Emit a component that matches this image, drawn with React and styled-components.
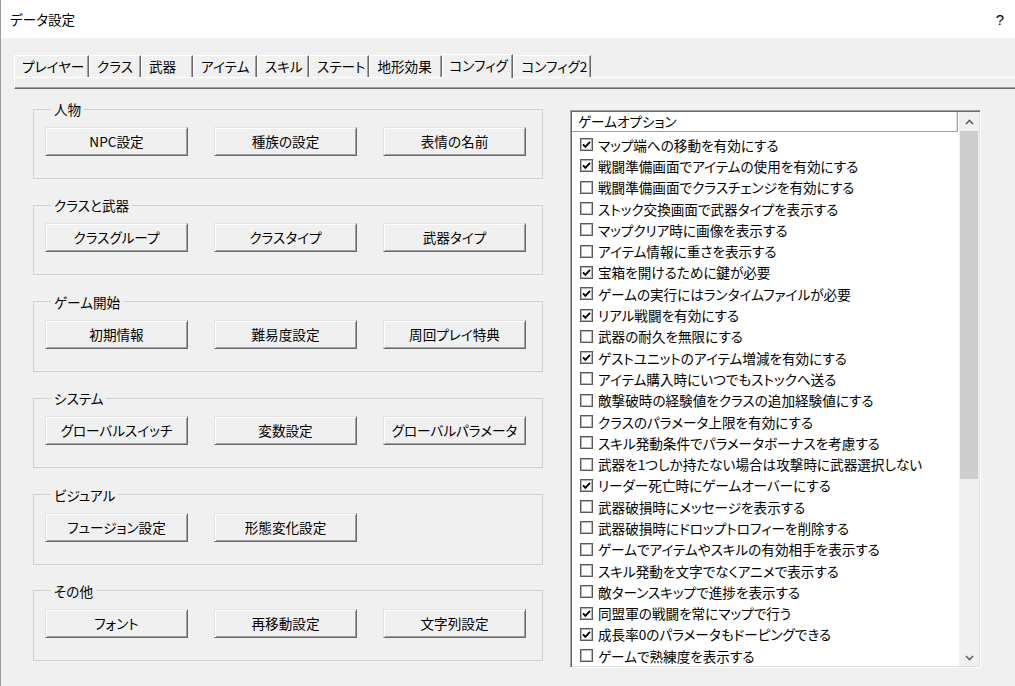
import React from 'react';
import styled, { createGlobalStyle } from 'styled-components';

const FONT = `"Noto Sans CJK JP", "Noto Sans", "Liberation Sans", sans-serif`;

const GlobalStyle = createGlobalStyle`
  html, body {
    margin: 0;
    padding: 0;
    background: #f0f0f0;
  }
`;

const Window = styled.div`
  width: 1015px;
  height: 686px;
  box-sizing: border-box;
  border-left: 1px solid #9a9a9a;
  background: #f0f0f0;
  display: flex;
  flex-direction: column;
  overflow: hidden;
  font-family: ${FONT};
  font-size: 13.6px;
  font-feature-settings: "palt";
  color: #000;
`;

const TitleBar = styled.div`
  flex: none;
  height: 38px;
  background: #fff;
  display: flex;
  align-items: center;
  justify-content: space-between;
  padding: 0 11px 0 9px;
`;

const Help = styled.span`
  font-family: "Liberation Sans", sans-serif;
  font-size: 15px;
`;

const TabBar = styled.div`
  flex: none;
  height: 39px;
  display: flex;
  align-items: flex-end;
  padding-left: 13px;
`;

const Tab = styled.div`
  flex: none;
  box-sizing: border-box;
  min-width: ${({ w }) => w}px;
  height: ${({ active }) => (active ? 24 : 22)}px;
  padding: 0 3px 0 ${({ active }) => (active ? 6 : 7)}px;
  border-top: 1px solid #fff;
  border-left: 1px solid #fff;
  border-right: 1px solid #696969;
  box-shadow: inset -1px 0 #a0a0a0;
  line-height: 20px;
  white-space: nowrap;
  position: relative;
  z-index: ${({ active }) => (active ? 1 : 0)};
  margin-bottom: ${({ active }) => (active ? -1 : 0)}px;
  background: #f0f0f0;
`;

const TabStrip = styled.div`
  flex: none;
  height: 12px;
  box-sizing: border-box;
  margin-left: 13px;
  border-top: 1px solid #fff;
  border-left: 1px solid #fff;
  border-bottom: 1px solid #696969;
  box-shadow: inset 0 -1px #a0a0a0;
`;

const Content = styled.div`
  display: flex;
  gap: 27px;
  padding: 12px 0 0 32px;
  align-items: flex-start;
`;

const LeftColumn = styled.div`
  width: 510px;
  display: flex;
  flex-direction: column;
  gap: 18.4px;
`;

const Group = styled.fieldset`
  margin: 0;
  min-width: 0;
  padding: 0 15px 22px 11px;
  border: 1px solid #d0d0d0;
`;

const Legend = styled.legend`
  margin-left: 6px;
  padding: 0 3px;
  line-height: 16px;
`;

const ButtonRow = styled.div`
  display: flex;
  gap: 26px;
  margin-top: 10px;
`;

const Button = styled.button`
  width: 143px;
  height: 29px;
  box-sizing: border-box;
  padding: 0;
  background: #f0f0f0;
  border: 1px solid;
  border-color: #e3e3e3 #696969 #696969 #e3e3e3;
  box-shadow: inset 1px 1px #fff, inset -1px -1px #a0a0a0;
  font: inherit;
  font-feature-settings: "palt";
  color: #000;
  line-height: 25px;
`;

const ListBox = styled.div`
  width: 411px;
  height: 558px;
  margin-top: 9px;
  box-sizing: border-box;
  padding: 1px;
  border: 1px solid;
  border-color: #a0a0a0 #fff #fff #a0a0a0;
  box-shadow: inset 1px 1px #696969, inset -1px -1px #e3e3e3;
  background: #fff;
  display: flex;
`;

const ListMain = styled.div`
  flex: 1;
  min-width: 0;
  display: flex;
  flex-direction: column;
  overflow: hidden;
`;

const Header = styled.div`
  flex: none;
  height: 20px;
  box-sizing: border-box;
  padding-left: 6px;
  border-bottom: 1px solid #a0a0a0;
  border-right: 1px solid #a0a0a0;
  box-shadow: inset -1px 0 #e3e3e3;
  margin-right: 1px;
  line-height: 19px;
  white-space: nowrap;
`;

const Rows = styled.div`
  padding-top: 2px;
`;

const Row = styled.div`
  height: 21.3px;
  display: flex;
  align-items: center;
  gap: 5px;
  padding-left: 8px;
  white-space: nowrap;
`;

const Box = styled.span`
  flex: none;
  width: 13px;
  height: 13px;
  box-sizing: border-box;
  border: 1px solid #5a5a5a;
  box-shadow: inset 0 0 0 1px #b4b4b4;
  background: #fff;
  display: flex;
  align-items: center;
  justify-content: center;
`;

const ScrollBar = styled.div`
  flex: none;
  width: 20px;
  background: #f0f0f0;
  display: flex;
  flex-direction: column;
`;

const ArrowButton = styled.div`
  flex: none;
  height: ${({ h }) => h}px;
  display: flex;
  align-items: center;
  justify-content: center;
`;

const Thumb = styled.div`
  flex: none;
  height: 348px;
  margin: 0 1px;
  background: #cdcdcd;
`;

const Track = styled.div`
  flex: 1;
`;

const Check = () => (
  <svg width="9" height="9" viewBox="0 0 9 9">
    <path d="M1 4.4 L3.4 6.8 L8 1.8" fill="none" stroke="#000" strokeWidth="1.9" />
  </svg>
);

const Chevron = ({ up }) => (
  <svg width="9" height="6" viewBox="0 0 9 6">
    <path
      d={up ? 'M1 5 L4.5 1.5 L8 5' : 'M1 1 L4.5 4.5 L8 1'}
      fill="none"
      stroke="#606060"
      strokeWidth="1.6"
    />
  </svg>
);

const tabs = [
  ['プレイヤー', 75],
  ['クラス', 52],
  ['武器', 52],
  ['アイテム', 64],
  ['スキル', 52],
  ['ステート', 60],
  ['地形効果', 73],
  ['コンフィグ', 71],
  ['コンフィグ2', 71],
];

const groups = [
  ['人物', ['NPC設定', '種族の設定', '表情の名前']],
  ['クラスと武器', ['クラスグループ', 'クラスタイプ', '武器タイプ']],
  ['ゲーム開始', ['初期情報', '難易度設定', '周回プレイ特典']],
  ['システム', ['グローバルスイッチ', '変数設定', 'グローバルパラメータ']],
  ['ビジュアル', ['フュージョン設定', '形態変化設定']],
  ['その他', ['フォント', '再移動設定', '文字列設定']],
];

const options = [
  ['マップ端への移動を有効にする', true],
  ['戦闘準備画面でアイテムの使用を有効にする', true],
  ['戦闘準備画面でクラスチェンジを有効にする', false],
  ['ストック交換画面で武器タイプを表示する', false],
  ['マップクリア時に画像を表示する', false],
  ['アイテム情報に重さを表示する', false],
  ['宝箱を開けるために鍵が必要', true],
  ['ゲームの実行にはランタイムファイルが必要', true],
  ['リアル戦闘を有効にする', true],
  ['武器の耐久を無限にする', false],
  ['ゲストユニットのアイテム増減を有効にする', true],
  ['アイテム購入時にいつでもストックへ送る', false],
  ['敵撃破時の経験値をクラスの追加経験値にする', false],
  ['クラスのパラメータ上限を有効にする', false],
  ['スキル発動条件でパラメータボーナスを考慮する', false],
  ['武器を1つしか持たない場合は攻撃時に武器選択しない', false],
  ['リーダー死亡時にゲームオーバーにする', true],
  ['武器破損時にメッセージを表示する', false],
  ['武器破損時にドロップトロフィーを削除する', false],
  ['ゲームでアイテムやスキルの有効相手を表示する', false],
  ['スキル発動を文字でなくアニメで表示する', false],
  ['敵ターンスキップで進捗を表示する', false],
  ['同盟軍の戦闘を常にマップで行う', true],
  ['成長率0のパラメータもドーピングできる', true],
  ['ゲームで熟練度を表示する', false],
];

export default function App() {
  return (
    <>
      <GlobalStyle />
      <Window>
        <TitleBar>
          <span>データ設定</span>
          <Help>?</Help>
        </TitleBar>
        <TabBar>
          {tabs.map(([label, w]) => (
            <Tab key={label} w={w} active={label === 'コンフィグ'}>
              {label}
            </Tab>
          ))}
        </TabBar>
        <TabStrip />
        <Content>
          <LeftColumn>
            {groups.map(([title, buttons]) => (
              <Group key={title}>
                <Legend>{title}</Legend>
                <ButtonRow>
                  {buttons.map((b) => (
                    <Button key={b}>{b}</Button>
                  ))}
                </ButtonRow>
              </Group>
            ))}
          </LeftColumn>
          <ListBox>
            <ListMain>
              <Header>ゲームオプション</Header>
              <Rows>
                {options.map(([text, checked]) => (
                  <Row key={text}>
                    <Box>{checked && <Check />}</Box>
                    <span>{text}</span>
                  </Row>
                ))}
              </Rows>
            </ListMain>
            <ScrollBar>
              <ArrowButton h={19}>
                <Chevron up />
              </ArrowButton>
              <Thumb />
              <Track />
              <ArrowButton h={17}>
                <Chevron />
              </ArrowButton>
            </ScrollBar>
          </ListBox>
        </Content>
      </Window>
    </>
  );
}
